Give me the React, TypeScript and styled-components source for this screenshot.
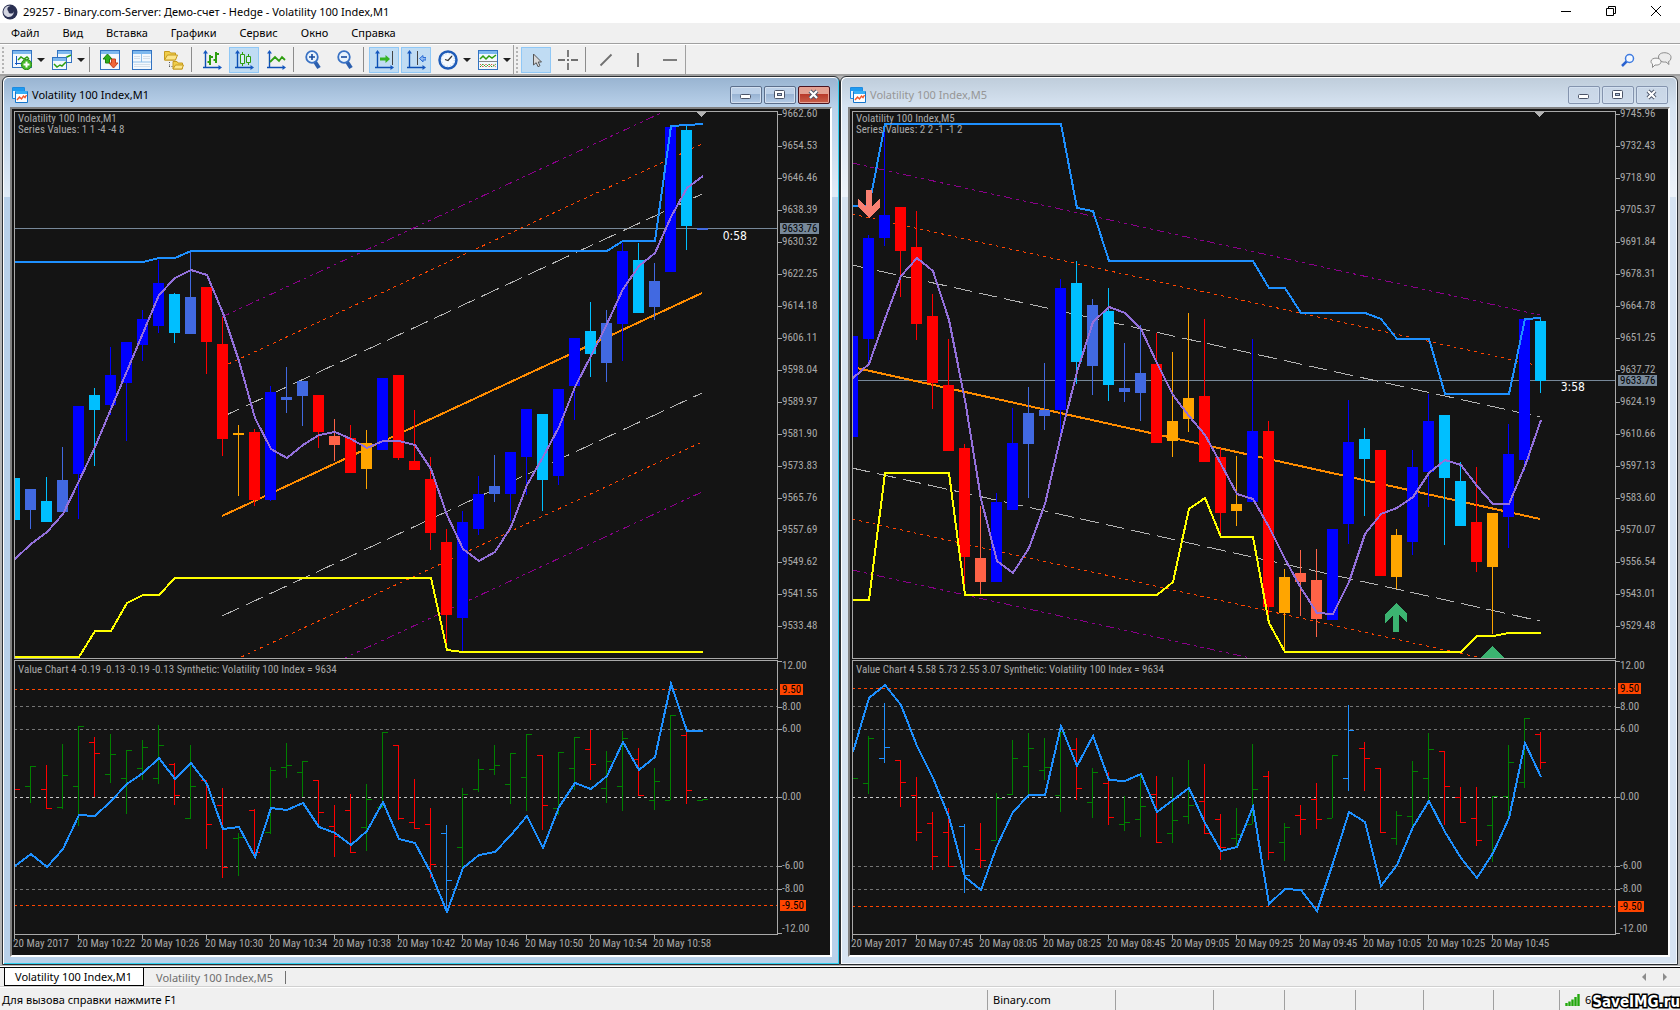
import React from 'react';
import styled, { createGlobalStyle } from 'styled-components';

/* ------------------------------------------------------------------ data */

type Tone = 'B' | 'C' | 'R' | 'r' | 'O' | 'T';
const TONES: Record<Tone, string> = {
  B: '#0000ff',
  C: '#00bfff',
  R: '#4169e1',
  r: '#ff0000',
  O: '#ffa500',
  T: '#ff6347',
};
/* tone, body top, body bottom, wick top, wick bottom */
type Candle = [Tone, number, number, number, number];
/* colour, high, low, open, close */
type Bar = ['g' | 'r' | 'b', number, number, number, number];
type Point = [number, number];

interface ChannelLine {
  kind: 'outer' | 'middle' | 'inner' | 'base';
  from: Point;
  to: Point;
}

interface Chart {
  title: string;
  series: string;
  active: boolean;
  prices: string[];
  lineY: number;
  timer: string;
  timerY: number;
  candles: Candle[];
  upper: Point[];
  lower: Point[];
  average: number[];
  channel: ChannelLine[];
  valueText: string;
  bars: Bar[];
  valueLine: number[];
  high: number;
  low: number;
  times: string[];
  signals: boolean;
}

const m1: Chart = {
  title: 'Volatility 100 Index,M1',
  series: 'Series Values: 1 1 -4 -4 8',
  active: true,
  prices: ['9662.60', '9654.53', '9646.46', '9638.39', '9630.32', '9622.25', '9614.18', '9606.11', '9598.04', '9589.97', '9581.90', '9573.83', '9565.76', '9557.69', '9549.62', '9541.55', '9533.48'],
  lineY: 228,
  timer: '0:58',
  timerY: 229,
  candles: [
    ['C', 478, 520, 478, 520], ['R', 489, 510, 489, 529], ['C', 501, 522, 477, 522], ['R', 480, 512, 447, 512],
    ['B', 406, 474, 406, 519], ['C', 395, 410, 388, 466], ['B', 375, 405, 347, 415], ['B', 342, 383, 342, 441],
    ['B', 319, 345, 310, 361], ['B', 283, 326, 260, 333], ['C', 294, 333, 293, 343], ['R', 297, 334, 252, 334],
    ['r', 287, 342, 287, 374], ['r', 344, 439, 317, 456], ['O', 433, 435, 425, 496], ['r', 432, 500, 429, 506],
    ['B', 392, 500, 386, 501], ['R', 397, 400, 367, 413], ['R', 381, 396, 381, 426], ['r', 395, 432, 395, 448],
    ['T', 436, 445, 419, 461], ['r', 438, 473, 425, 473], ['O', 443, 469, 430, 489], ['B', 378, 450, 378, 450],
    ['r', 375, 458, 375, 460], ['r', 461, 470, 410, 470], ['r', 479, 533, 457, 550], ['r', 542, 615, 529, 649],
    ['B', 522, 618, 511, 651], ['B', 494, 529, 476, 535], ['R', 486, 494, 455, 502], ['B', 452, 494, 452, 521],
    ['B', 409, 457, 409, 495], ['C', 414, 480, 414, 511], ['B', 389, 476, 389, 485], ['B', 338, 386, 338, 420],
    ['C', 331, 354, 302, 377], ['R', 323, 363, 310, 382], ['B', 251, 324, 243, 361], ['C', 260, 313, 243, 313],
    ['R', 281, 307, 263, 320], ['B', 127, 272, 127, 272], ['C', 130, 226, 125, 250], ['R', 228, 230, 228, 230],
  ],
  upper: [[0, 262], [8, 262], [9, 258], [10, 258], [11, 251], [37, 251], [38, 241], [40, 241], [41, 126], [42, 125], [43, 124]],
  lower: [[0, 657], [4, 657], [5, 631], [6, 631], [7, 603], [8, 595], [9, 595], [10, 578], [26, 578], [27, 650], [28, 652], [43, 652]],
  average: [559, 544, 532, 514, 481, 447, 409, 371, 333, 295, 278, 270, 275, 313, 361, 418, 449, 458, 445, 435, 432, 439, 448, 441, 441, 445, 469, 515, 549, 561, 552, 527, 485, 457, 427, 387, 356, 324, 289, 266, 253, 217, 188, 176],
  channel: [
    { kind: 'outer', from: [13, 317], to: [43, 94] },
    { kind: 'middle', from: [13, 367], to: [43, 144] },
    { kind: 'inner', from: [13, 417], to: [43, 194] },
    { kind: 'base', from: [13, 516], to: [43, 293] },
    { kind: 'inner', from: [13, 616], to: [43, 393] },
    { kind: 'middle', from: [13, 666], to: [43, 442] },
    { kind: 'outer', from: [13, 715], to: [43, 492] },
  ],
  valueText: 'Value Chart 4 -0.19 -0.13 -0.19 -0.13 Synthetic: Volatility 100 Index = 9634',
  bars: [
    ['r', 789, 790, 789, 789], ['g', 766, 803, 786, 766], ['r', 765, 808, 789, 808], ['g', 744, 809, 807, 775],
    ['g', 726, 826, 786, 726], ['r', 737, 797, 742, 753], ['g', 734, 783, 774, 754], ['g', 750, 814, 778, 750],
    ['g', 740, 780, 768, 747], ['g', 725, 784, 778, 745], ['r', 763, 805, 764, 795], ['g', 745, 819, 818, 786],
    ['r', 780, 849, 780, 824], ['r', 788, 878, 805, 867], ['g', 833, 876, 838, 837], ['r', 809, 855, 810, 852],
    ['g', 767, 834, 832, 770], ['g', 743, 778, 767, 765], ['g', 761, 797, 772, 761], ['r', 780, 827, 780, 812],
    ['r', 805, 857, 826, 836], ['r', 794, 852, 810, 852], ['g', 784, 851, 827, 799], ['g', 732, 808, 807, 732],
    ['r', 745, 820, 745, 818], ['r', 779, 828, 822, 828], ['r', 808, 878, 824, 864], ['b', 825, 908, 833, 880],
    ['g', 788, 868, 847, 794], ['g', 759, 792, 789, 769], ['g', 745, 775, 769, 765], ['g', 753, 804, 784, 753],
    ['g', 734, 811, 777, 734], ['r', 755, 830, 755, 805], ['g', 752, 815, 808, 752], ['g', 737, 790, 768, 737],
    ['r', 730, 780, 749, 764], ['g', 751, 803, 788, 761], ['g', 731, 811, 786, 738], ['r', 748, 795, 759, 795],
    ['g', 768, 810, 800, 781], ['g', 715, 800, 800, 715], ['r', 732, 804, 735, 790], ['g', 799, 801, 800, 799],
  ],
  valueLine: [866, 854, 867, 849, 815, 816, 801, 784, 773, 758, 779, 763, 784, 829, 827, 857, 808, 810, 803, 827, 833, 845, 831, 802, 839, 843, 873, 912, 868, 855, 852, 835, 816, 848, 807, 783, 789, 776, 742, 770, 757, 684, 731, 731],
  high: 689,
  low: 905,
  times: ['20 May 2017', '20 May 10:22', '20 May 10:26', '20 May 10:30', '20 May 10:34', '20 May 10:38', '20 May 10:42', '20 May 10:46', '20 May 10:50', '20 May 10:54', '20 May 10:58'],
  signals: false,
};

const m5: Chart = {
  title: 'Volatility 100 Index,M5',
  series: 'Series Values: 2 2 -1 -1 2',
  active: false,
  prices: ['9745.96', '9732.43', '9718.90', '9705.37', '9691.84', '9678.31', '9664.78', '9651.25', '9637.72', '9624.19', '9610.66', '9597.13', '9583.60', '9570.07', '9556.54', '9543.01', '9529.48'],
  lineY: 380,
  timer: '3:58',
  timerY: 380,
  candles: [
    ['B', 336, 437, 336, 437], ['B', 238, 339, 235, 363], ['B', 215, 238, 127, 246], ['r', 207, 251, 207, 297],
    ['r', 247, 324, 211, 340], ['r', 316, 383, 294, 409], ['r', 385, 451, 339, 451], ['r', 448, 557, 444, 594],
    ['T', 558, 582, 506, 594], ['B', 502, 582, 493, 582], ['B', 443, 510, 408, 510], ['R', 413, 444, 387, 498],
    ['R', 410, 416, 363, 430], ['B', 288, 410, 279, 441], ['C', 283, 362, 261, 384], ['R', 305, 366, 299, 395],
    ['C', 311, 385, 288, 401], ['R', 388, 392, 343, 402], ['R', 373, 393, 325, 421], ['r', 364, 443, 333, 443],
    ['O', 421, 441, 352, 457], ['O', 398, 419, 313, 432], ['r', 396, 462, 319, 462], ['r', 457, 513, 448, 536],
    ['O', 504, 511, 456, 526], ['B', 431, 502, 339, 502], ['r', 431, 607, 421, 617], ['O', 577, 613, 569, 651],
    ['T', 573, 582, 550, 616], ['T', 580, 619, 549, 637], ['B', 529, 620, 529, 620], ['B', 442, 524, 400, 544],
    ['C', 439, 459, 428, 516], ['r', 450, 576, 450, 576], ['O', 535, 577, 529, 589], ['B', 467, 542, 450, 555],
    ['B', 421, 472, 394, 507], ['C', 415, 478, 415, 545], ['C', 481, 526, 462, 526], ['r', 522, 562, 467, 572],
    ['O', 513, 567, 513, 634], ['B', 454, 517, 424, 548], ['B', 319, 460, 319, 471], ['C', 321, 381, 319, 393],
  ],
  upper: [[0, 206], [1, 206], [2, 124], [13, 124], [14, 208], [15, 211], [16, 261], [25, 261], [26, 288], [27, 288], [28, 313], [32, 313], [33, 319], [34, 339], [36, 339], [37, 394], [41, 394], [42, 319], [43, 318]],
  lower: [[0, 600], [1, 600], [2, 473], [6, 473], [7, 595], [19, 595], [20, 582], [21, 509], [22, 498], [23, 537], [25, 537], [26, 623], [27, 652], [38, 652], [39, 636], [40, 636], [41, 633], [43, 633]],
  average: [378, 364, 319, 276, 258, 271, 320, 400, 499, 561, 573, 548, 504, 435, 372, 322, 307, 313, 329, 363, 395, 416, 435, 464, 494, 499, 527, 559, 588, 613, 614, 582, 534, 514, 508, 497, 473, 460, 465, 486, 504, 504, 466, 420],
  channel: [
    { kind: 'outer', from: [0, 163], to: [43, 315] },
    { kind: 'middle', from: [0, 214], to: [43, 366] },
    { kind: 'inner', from: [0, 265], to: [43, 417] },
    { kind: 'base', from: [0, 367], to: [43, 519] },
    { kind: 'inner', from: [0, 468], to: [43, 621] },
    { kind: 'middle', from: [0, 519], to: [43, 671] },
    { kind: 'outer', from: [0, 570], to: [43, 722] },
  ],
  valueText: 'Value Chart 4 5.58 5.73 2.55 3.07 Synthetic: Volatility 100 Index = 9634',
  bars: [
    ['g', 777, 779, 778, 778], ['g', 736, 794, 783, 738], ['b', 703, 763, 758, 747], ['r', 760, 807, 760, 782],
    ['r', 777, 841, 795, 832], ['r', 812, 870, 823, 856], ['r', 808, 866, 832, 866], ['b', 824, 893, 826, 875],
    ['r', 823, 868, 849, 860], ['g', 793, 840, 840, 798], ['g', 740, 795, 794, 758], ['g', 733, 797, 766, 748],
    ['g', 738, 780, 770, 767], ['g', 728, 812, 795, 732], ['r', 738, 800, 749, 788], ['g', 768, 818, 802, 772],
    ['r', 772, 825, 783, 817], ['g', 796, 831, 824, 822], ['g', 774, 837, 819, 806], ['r', 776, 842, 794, 842],
    ['g', 777, 843, 833, 820], ['g', 760, 824, 816, 805], ['r', 764, 834, 801, 833], ['r', 814, 860, 819, 847],
    ['g', 808, 847, 838, 834], ['g', 744, 824, 824, 789], ['r', 771, 860, 776, 852], ['g', 823, 861, 842, 827],
    ['r', 805, 835, 815, 819], ['r', 783, 829, 799, 819], ['g', 755, 818, 818, 755], ['b', 705, 791, 778, 730],
    ['r', 742, 791, 748, 758], ['r', 768, 832, 768, 832], ['g', 811, 845, 838, 815], ['g', 761, 827, 816, 771],
    ['g', 733, 800, 778, 749], ['r', 751, 825, 751, 786], ['r', 787, 822, 797, 822], ['r', 787, 846, 818, 840],
    ['g', 796, 862, 825, 796], ['g', 745, 818, 796, 762], ['g', 718, 788, 782, 718], ['r', 732, 769, 734, 762],
  ],
  valueLine: [752, 698, 685, 705, 746, 778, 817, 877, 890, 846, 812, 795, 795, 726, 766, 736, 780, 781, 774, 812, 800, 788, 823, 851, 847, 807, 904, 889, 890, 911, 863, 812, 822, 886, 865, 827, 801, 832, 858, 878, 853, 818, 743, 777],
  high: 688,
  low: 906,
  times: ['20 May 2017', '20 May 07:45', '20 May 08:05', '20 May 08:25', '20 May 08:45', '20 May 09:05', '20 May 09:25', '20 May 09:45', '20 May 10:05', '20 May 10:25', '20 May 10:45'],
  signals: true,
};

/* ---------------------------------------------------------------- styles */

const UI_FONT = '"Noto Sans", "Open Sans", sans-serif';
const CHART_FONT = '"Roboto Condensed", Roboto, sans-serif';
const GREY = '#a9a9a9';
const CHART_BG = '#141414';

const GlobalStyle = createGlobalStyle`
  * { box-sizing: border-box; }
  body { margin: 0; background: #f0f0f0; }
  button, a { font: inherit; color: inherit; text-decoration: none; }
  button { padding: 0; margin: 0; border: 0; background: none; }
`;

const Terminal = styled.div`
  display: flex;
  flex-direction: column;
  height: 100vh;
  overflow: hidden;
  background: #f0f0f0;
  color: #000;
  font: 11px/16px ${UI_FONT};
`;

const TitleBar = styled.header`
  display: flex;
  align-items: center;
  flex: none;
  height: 23px;
  padding: 0 2px;
  background: #fff;
`;

const AppTitle = styled.h1`
  flex: 1;
  margin: 0 0 0 5px;
  font: inherit;
  white-space: nowrap;
`;

const CaptionButton = styled.button`
  display: grid;
  place-items: center;
  width: 45px;
  height: 22px;
`;

const Menu = styled.nav`
  display: flex;
  align-items: center;
  flex: none;
  gap: 23px;
  height: 21px;
  padding-left: 11px;
  border-bottom: 1px solid #a0a0a0;
`;

const Toolbar = styled.div`
  display: flex;
  flex: none;
  align-items: center;
  height: 30px;
  border-top: 1px solid #fff;
`;

const ToolGroup = styled.div`
  display: flex;
  align-items: center;
  align-self: stretch;
  border-right: 1px solid #a0a0a0;
`;

const Grip = styled.span`
  width: 2px;
  height: 26px;
  margin: 0 3px 0 2px;
  background: repeating-linear-gradient(#b4b4b4 0 2px, transparent 2px 4px);
`;

const ToolButton = styled.button<{ $on?: boolean; $spaced?: boolean }>`
  display: grid;
  place-items: center;
  width: 30px;
  height: 26px;
  margin-right: ${(p) => (p.$spaced ? 2 : 0)}px;
  border: 1px solid ${(p) => (p.$on ? '#90c8f6' : 'transparent')};
  background: ${(p) => (p.$on ? '#c0dcf3' : 'transparent')};
`;

const DropArrow = styled.button`
  display: flex;
  align-items: center;
  width: 10px;
  height: 26px;
  &::after {
    content: '';
    border: 4px solid transparent;
    border-top-color: #202020;
    border-bottom: 0;
  }
`;

const Divider = styled.span`
  width: 1px;
  height: 25px;
  margin: 0 5px 0 2px;
  background: #8c8c8c;
`;

const ToolEnd = styled.div`
  display: flex;
  gap: 3px;
  margin-left: auto;
  padding-right: 4px;
`;

const Workspace = styled.main`
  display: flex;
  flex: 1;
  min-height: 0;
  padding: 0 2px 1px;
  border-top: 2px solid #a0a0a0;
  border-bottom: 1px solid #fff;
  background: #b4b4b4;
`;

const WindowFrame = styled.section<{ $active: boolean }>`
  display: flex;
  flex-direction: column;
  flex: 1;
  min-width: 0;
  border: 1px solid #2b2f33;
  border-radius: 6px 6px 0 0;
  background: ${(p) => (p.$active ? '#b9d1ea' : '#d7e4f2')};
  box-shadow: inset 1px 1px #fff, inset -1px -1px ${(p) => (p.$active ? '#2fd0f0' : '#f4f8fc')};
  padding: 1px;
`;

const WindowTitle = styled.div<{ $active: boolean }>`
  display: flex;
  align-items: center;
  flex: none;
  height: 29px;
  gap: 4px;
  padding: 8px 8px 3px;
  border-radius: 5px 5px 0 0;
  color: ${(p) => (p.$active ? '#000' : '#969696')};
  background: linear-gradient(${(p) => (p.$active ? '#99b4d1, #b9d1ea' : '#bfcddb, #d7e4f2')});
`;

const WindowName = styled.h2`
  flex: 1;
  margin: 0;
  font: inherit;
  white-space: nowrap;
`;

const WindowButtons = styled.div`
  display: flex;
  gap: 2px;
`;

const WindowButton = styled.button<{ $active: boolean; $danger?: boolean }>`
  display: grid;
  place-items: center;
  width: 32px;
  height: 18px;
  border: 1px solid ${(p) => (p.$danger ? '#4a1420' : p.$active ? '#5c6f8c' : '#8494ae')};
  border-radius: 2px;
  box-shadow: inset 0 0 0 1px ${(p) => (p.$danger ? '#e8a294' : '#d3e0f0')};
  background: ${(p) =>
    p.$danger
      ? 'linear-gradient(#e3a193 0 45%, #b8392a 45%, #c8604a)'
      : p.$active
        ? 'linear-gradient(#bcd0e8 0 45%, #98b3d3 45%, #b4cbe6)'
        : 'linear-gradient(#c8d6e6, #cddaea)'};
`;

const WindowClient = styled.div`
  display: flex;
  flex: 1;
  min-height: 0;
  padding: 0 6px 6px;
  background:
    linear-gradient(transparent, #ffffff90) 0 0 / 6px 90px no-repeat,
    linear-gradient(transparent, #ffffff90) 100% 0 / 6px 90px no-repeat;
`;

const ChartBody = styled.div`
  display: flex;
  flex-direction: column;
  flex: 1;
  min-width: 0;
  padding-left: 2px;
  border: 2px solid;
  border-color: #808080 #fff #fff #808080;
  background: ${CHART_BG};
  color: ${GREY};
  font: 11px/10px ${CHART_FONT};
`;

const Pane = styled.div<{ $grow: number }>`
  display: flex;
  flex: ${(p) => p.$grow} 1 0;
  min-height: 0;
  & + & { margin-top: 1px; }
`;

const Plot = styled.div<{ $inset?: boolean }>`
  position: relative;
  flex: 1;
  min-width: 0;
  margin-top: ${(p) => (p.$inset ? 2 : 0)}px;
  border: 1px solid ${GREY};
  overflow: hidden;
  svg { display: block; width: 100%; height: 100%; }
`;

const PlotCaption = styled.p<{ $sub?: boolean }>`
  position: absolute;
  top: ${(p) => (p.$sub ? 3 : 1)}px;
  left: 3px;
  margin: 0;
  line-height: 11px;
  white-space: nowrap;
`;

const Countdown = styled.span<{ $y: number }>`
  position: absolute;
  top: calc(100% * ${(p) => p.$y - 112} / 546);
  right: 30px;
  color: #fff;
  font: 12px/14px "DejaVu Sans Condensed", "DejaVu Sans", sans-serif;
`;

const Scale = styled.div<{ $even?: boolean }>`
  position: relative;
  display: flex;
  flex-direction: column;
  flex: none;
  width: 52px;
  justify-content: ${(p) => (p.$even ? 'space-between' : 'flex-start')};
  padding-bottom: ${(p) => (p.$even ? 28 : 0)}px;
`;

const ScaleLabel = styled.span<{ $tick?: 'top' | 'bottom' }>`
  display: flex;
  align-items: ${(p) => (p.$tick === 'top' ? 'flex-start' : p.$tick === 'bottom' ? 'flex-end' : 'center')};
  height: 10px;
  &::before {
    content: '';
    width: 4px;
    height: 1px;
    background: ${GREY};
  }
`;

const Spring = styled.i<{ $grow: number }>`
  flex: ${(p) => p.$grow} 1 0;
`;

const Marker = styled.span<{ $top: number; $of: number; $hot?: boolean }>`
  position: absolute;
  left: 2px;
  top: calc(100% * ${(p) => p.$top} / ${(p) => p.$of});
  padding: 0 2px;
  color: #000;
  line-height: 11px;
  background: ${(p) => (p.$hot ? '#ff4500' : '#778899')};
`;

const TimeScale = styled.div`
  display: flex;
  flex: none;
  height: 20px;
  margin-left: -1px;
  overflow: hidden;
`;

const TimeLabel = styled.span`
  flex: none;
  width: 64px;
  white-space: nowrap;
  &::before {
    content: '';
    display: block;
    width: 1px;
    height: 4px;
    margin-left: 1px;
    background: ${GREY};
  }
`;

const TabStrip = styled.nav`
  display: flex;
  flex: none;
  height: 19px;
  padding-left: 4px;
  border-top: 1px solid #000;
`;

const Tab = styled.a<{ $on?: boolean }>`
  padding: 0 ${(p) => (p.$on ? 11 : 12)}px 0 ${(p) => (p.$on ? 10 : 12)}px;
  margin: ${(p) => (p.$on ? '0' : '3px 0 2px')};
  line-height: ${(p) => (p.$on ? 17 : 13)}px;
  white-space: nowrap;
  border: ${(p) => (p.$on ? '1px solid #000' : '0 solid #707070')};
  border-top: 0;
  border-right-width: 1px;
  color: ${(p) => (p.$on ? '#000' : '#6d6d6d')};
  background: ${(p) => (p.$on ? '#fff' : 'transparent')};
`;

const TabScroll = styled.div`
  display: flex;
  align-items: center;
  gap: 17px;
  margin-left: auto;
  padding-right: 13px;
`;

const Nudge = styled.button<{ $back?: boolean }>`
  border: 4px solid transparent;
  border-left-color: ${(p) => (p.$back ? 'transparent' : '#8c8c8c')};
  border-right-color: ${(p) => (p.$back ? '#8c8c8c' : 'transparent')};
  border-left-width: ${(p) => (p.$back ? 0 : 4)}px;
  border-right-width: ${(p) => (p.$back ? 4 : 0)}px;
`;

const StatusBar = styled.footer`
  position: relative;
  display: flex;
  flex: none;
  height: 24px;
  padding-top: 3px;
  border-top: 1px solid #d0d0d0;
  box-shadow: inset 0 1px #fff;
`;

const StatusHint = styled.span`
  flex: 1;
  padding-left: 2px;
  line-height: 20px;
`;

const StatusCell = styled.span<{ $w: number }>`
  display: flex;
  flex: none;
  align-items: center;
  gap: 4px;
  width: ${(p) => p.$w}px;
  padding-left: 5px;
  line-height: 20px;
  border-left: 1px solid #a0a0a0;
`;

const Watermark = styled.span`
  position: absolute;
  right: 0;
  bottom: 0;
  color: #fff;
  font: bold 15px/16px "DejaVu Sans Condensed", "DejaVu Sans", sans-serif;
  -webkit-text-stroke: 3px #000;
  paint-order: stroke fill;
`;

/* ----------------------------------------------------------------- icons */

const Svg = ({ w = 20, h = 20, children }: { w?: number; h?: number; children: React.ReactNode }) => (
  <svg width={w} height={h} viewBox={`0 0 ${w} ${h}`} fill="none" aria-hidden="true">
    {children}
  </svg>
);

const Frame = ({ x = 0, y = 0, w = 20, h = 20 }: { x?: number; y?: number; w?: number; h?: number }) => (
  <>
    <rect x={x + 0.5} y={y + 0.5} width={w - 1} height={h - 1} fill="#f3f8fd" stroke="#3273c2" />
    <rect x={x + 1} y={y + 1} width={w - 2} height={3} fill="#7db8ee" />
  </>
);

const Axes = () => (
  <>
    <path d="M3.5 2v16M1 17.5h17" stroke="#0d4fb4" strokeWidth="1.4" />
    <path d="M3.5 0l2.5 3.5h-5zM20 17.5l-3.5-2.5v5z" fill="#1658c0" />
  </>
);

const AppIcon = () => (
  <Svg w={16} h={16}>
    <circle cx="8" cy="8" r="7.500" fill="#2a3052" />
    <path d="M1.500 7c.8-3.800 4.200-5.700 7-5 -2.600.6-3.600 2.200-3 4 .6 1.700 3.400 1.600 5.600 1.200 1.300 1.400.2 4-2 5.300-3.800 1.700-8-1.200-7.600-5.500z" fill="#d4d6e2" />
    <circle cx="9" cy="7" r="2.600" fill="#2a3052" />
  </Svg>
);

const NewChartIcon = () => (
  <Svg>
    <Frame h={18} />
    <path d="M4.500 6v9M3 13.500h10" stroke="#1658c0" />
    <path d="M6 10l3-3 3 2 3-2 2 2" stroke="#2e9e10" strokeWidth="1.500" />
    <circle cx="14.500" cy="14.500" r="5.200" fill="#45b82a" stroke="#2b8a17" />
    <path d="M11.500 14.500h6M14.500 11.500v6" stroke="#fff" strokeWidth="2" />
  </Svg>
);

const WindowsIcon = () => (
  <Svg>
    <Frame x={5} w={15} h={13} />
    <path d="M12 9l3-2 4-2" stroke="#2e9e10" strokeWidth="1.500" />
    <Frame y={7} w={15} h={13} />
    <path d="M2 14l3 3 3-2 2 1 4-4" stroke="#2e9e10" strokeWidth="1.500" />
  </Svg>
);

const TradeIcon = () => (
  <Svg>
    <Frame />
    <path d="M7.500 4l4.500 5H9.500v4h-4V9H3z" fill="#2fae1c" stroke="#1b7f10" />
    <path d="M13.500 18l4.500-5h-2.500V9h-4v4H9z" fill="#f0673a" stroke="#c4401c" />
  </Svg>
);

const PanelIcon = () => (
  <Svg>
    <Frame />
    <path d="M1 12h18M9.500 4v8" stroke="#8fc0ea" />
    <path d="M2 6.500h6M2 8.500h6M11 6.500h7M11 8.500h7M2 14.500h16M2 16.500h16" stroke="#d4dfe9" />
  </Svg>
);

const FoldersIcon = () => (
  <Svg>
    <path d="M.5 1.500h5l1 1.500h5v7H.5z" fill="#f0cd4a" stroke="#c59a1e" />
    <path d="M.5 10l3-5h10l-2 5z" fill="#fbe58a" stroke="#c59a1e" />
    <path d="M5.500 12v5M5 16.500h4" stroke="#555" strokeDasharray="1 1.500" />
    <path d="M9 11.500h4l1 1.500h4.500v6H9z" fill="#f0cd4a" stroke="#c59a1e" />
    <path d="M9 19l2.500-4h8L18 19z" fill="#fbe58a" stroke="#c59a1e" />
  </Svg>
);

const BarsIcon = () => (
  <Svg>
    <Axes />
    <path d="M8 5v10M5.500 12H8M8 7h3M14 2v11M11.500 10H14M14 4h3" stroke="#2e9e10" strokeWidth="2" />
  </Svg>
);

const CandlesIcon = () => (
  <Svg>
    <Axes />
    <path d="M8.500 2v14M14.500 4v11" stroke="#2e9e10" />
    <path d="M6.500 4.500h4v9h-4zM12.500 6.500h4v6h-4z" fill="#d8ecf8" stroke="#2e9e10" />
  </Svg>
);

const LineIcon = () => (
  <Svg>
    <Axes />
    <path d="M4 12l5-5 4 4 3-4 3 3" stroke="#2e9e10" strokeWidth="1.800" />
  </Svg>
);

const ZoomIcon = ({ plus }: { plus?: boolean }) => (
  <Svg>
    <path d="M10.500 11l4.500 7" stroke="#2c5fae" strokeWidth="4" />
    <circle cx="8" cy="7" r="5.800" fill="#eaf4fd" stroke="#3a72c4" strokeWidth="1.800" />
    <path d={plus ? 'M5 7h6M8 4v6' : 'M5 7h6'} stroke="#174a9c" strokeWidth="1.600" />
  </Svg>
);

const ScrollIcon = () => (
  <Svg>
    <Axes />
    <path d="M18.500 1v14" stroke="#444" />
    <path d="M6 7.500h5.500V5l4.500 4-4.500 4v-2.500H6z" fill="#35b324" />
  </Svg>
);

const ShiftIcon = () => (
  <Svg>
    <Axes />
    <path d="M11.500 1v14" stroke="#444" />
    <path d="M13.500 8.500l3.500-3v2h3v2.500h-3v2z" fill="#8db8f0" stroke="#2c6fd6" />
  </Svg>
);

const ClockIcon = () => (
  <Svg>
    <circle cx="10" cy="10" r="8.500" fill="#f6fafe" stroke="#1f5cb8" strokeWidth="2.500" />
    <circle cx="10" cy="10" r="6.300" stroke="#9cc3ec" strokeDasharray="1 2.300" />
    <path d="M14 6l-4 4.500-3-1" stroke="#333" strokeWidth="1.200" />
  </Svg>
);

const IndicatorsIcon = () => (
  <Svg>
    <Frame />
    <path d="M2 9l3-3 3 3 3-3 3 2 4-3" stroke="#2e9e10" strokeWidth="1.500" />
    <path d="M1 11.500h18" stroke="#888" />
    <path d="M2 14l3 3 3-3 3 3 3-3 4 3" stroke="#e2543a" strokeDasharray="2 1" />
    <path d="M2 17l3-3 3 3 3-3 3 3 4-3" stroke="#2e9e10" strokeDasharray="2 1" />
  </Svg>
);

const PointerIcon = () => (
  <Svg>
    <path d="M7.500 4v11l2.700-2.300 1.800 4 2-1-1.800-3.700h3.300z" fill="#d8d8d8" stroke="#555" />
  </Svg>
);

const CrosshairIcon = () => (
  <Svg>
    <path d="M0 10h7M13 10h7M10 0v7M10 13v7M9 10h2" stroke="#707070" strokeWidth="1.800" />
  </Svg>
);

const StrokeIcon = ({ d }: { d: string }) => (
  <Svg>
    <path d={d} stroke="#707070" strokeWidth="1.800" />
  </Svg>
);

const FindIcon = () => (
  <Svg w={14} h={14}>
    <path d="M1 13l5-5" stroke="#2a62d0" strokeWidth="2.500" />
    <circle cx="8.500" cy="5.500" r="4" fill="#f4f9ff" stroke="#3f7be0" strokeWidth="1.500" />
  </Svg>
);

const ChatIcon = () => (
  <Svg w={22} h={16}>
    <path d="M8.500 5c0-6 12.500-5.500 12.500.2 0 3-1.500 4-2.500 4.300l.5 3-3-2.500c-4 .5-7.500-1-7.500-5z" fill="#ececec" stroke="#8c8c8c" />
    <path d="M1 9.500c0-4.500 10-4.500 10 0 0 3-3 3.800-6 3.500l-2.500 2.500V12C1.500 11.500 1 10.500 1 9.500z" fill="#f6f6f6" stroke="#8c8c8c" />
  </Svg>
);

const ChartWindowIcon = () => (
  <Svg w={16} h={16}>
    <path d="M.5.5h12v11H.5z" fill="#e6f2fc" stroke="#1f8be0" />
    <path d="M1 1h11v3H1z" fill="#1f9bf0" />
    <path d="M3.500 4.500h12v11h-12z" fill="#fff" stroke="#1576cc" />
    <path d="M4 4h11v3H4z" fill="#35aef5" />
    <path d="M5 13l2.500-3 2 2 2-3 1.500 1.500L14.500 8" stroke="#f0582a" strokeWidth="1.400" />
  </Svg>
);

const MinimizeGlyph = () => (
  <Svg w={14} h={12}>
    <rect x="1.500" y="5.500" width="10" height="4" rx="1" fill="#fff" stroke="#4b5468" />
  </Svg>
);

const RestoreGlyph = () => (
  <Svg w={14} h={12}>
    <rect x="1.500" y="1.500" width="10" height="8" rx="1" fill="#fff" stroke="#4b5468" />
    <rect x="4.500" y="4.500" width="4" height="2" fill="#b0c4de" stroke="#4b5468" />
  </Svg>
);

const CloseGlyph = () => (
  <Svg w={14} h={12}>
    <path d="M3 2l7 7M10 2L3 9" stroke="#4b5468" strokeWidth="4" />
    <path d="M3 2l7 7M10 2L3 9" stroke="#fff" strokeWidth="2.200" />
  </Svg>
);

const SignalIcon = () => (
  <Svg w={16} h={12}>
    <path d="M1.500 12V9M4.500 12V7.500M7.500 12V5.500M10.500 12V3M13.500 12V0" stroke="#22a80c" strokeWidth="2.400" />
  </Svg>
);

/* ---------------------------------------------------------------- charts */

const STEP = 16;
const CHANNEL_STYLE = {
  outer: { stroke: '#8b008b', strokeWidth: 1, strokeDasharray: '8 4 3 4 3 4' },
  middle: { stroke: '#ff4500', strokeWidth: 1, strokeDasharray: '3 4' },
  inner: { stroke: '#b4b4b4', strokeWidth: 1, strokeDasharray: '19 7' },
  base: { stroke: '#ff8c00', strokeWidth: 2 },
};
const BAR_TONES = { g: '#008000', r: '#ff0000', b: '#1e90ff' };

const path = (points: Point[]) => points.map(([k, y]) => `${k * STEP + 1},${y}`).join(' ');

const PricePlot = ({ chart }: { chart: Chart }) => (
  <svg viewBox="1 112 762 546" preserveAspectRatio="none" shapeRendering="crispEdges" fill="none" role="img" aria-label={chart.title}>
    <rect x="0" y={chart.lineY} width="764" height="1" fill="#778899" />
    {chart.channel.map((line, i) => (
      <line key={i} x1={line.from[0] * STEP} y1={line.from[1]} x2={line.to[0] * STEP} y2={line.to[1]} {...CHANNEL_STYLE[line.kind]} />
    ))}
    {chart.candles.map(([tone, top, bottom, high, low], k) => (
      <g key={k} fill={TONES[tone]}>
        <rect x={k * STEP} y={high} width="1" height={low - high} />
        <rect x={k * STEP - 5} y={top} width="11" height={bottom - top} />
      </g>
    ))}
    <polyline points={path(chart.upper)} stroke="#1e90ff" strokeWidth="2" />
    <polyline points={path(chart.lower)} stroke="#ffff00" strokeWidth="2" />
    <polyline points={path(chart.average.map((y, k) => [k, y]))} stroke="#9370db" strokeWidth="2" />
    <path d="M682 112h10l-5 5z" fill="#b4b4b4" />
    {chart.signals && (
      <>
        <path d="M14 190h6v16l8-7v8l-11 11-11-11v-8l8 7z" fill="#fa8072" />
        <path d="M541 632h6v-17l8 8v-9l-11-11-11 11v9l8-8z" fill="#3cb371" />
        <path d="M640 646l12 12h-24z" fill="#3cb371" />
      </>
    )}
  </svg>
);

const ValuePlot = ({ chart }: { chart: Chart }) => (
  <svg viewBox="1 661 762 273" preserveAspectRatio="none" shapeRendering="crispEdges" fill="none" role="img" aria-label="Value Chart">
    {[706, 729, 866, 889].map((y) => (
      <path key={y} d={`M0 ${y}.5h764`} stroke="#757575" strokeDasharray="3 3" />
    ))}
    <path d="M0 797.5h764" stroke="#c8c8c8" strokeDasharray="3 3" />
    {[chart.high, chart.low].map((y) => (
      <path key={y} d={`M0 ${y}.5h764`} stroke="#ff4500" strokeDasharray="3 3" />
    ))}
    {chart.bars.map(([tone, high, low, open, close], k) => (
      <g key={k} fill={BAR_TONES[tone]}>
        <rect x={k * STEP} y={high} width="1" height={low - high} />
        <rect x={k * STEP - 5} y={open} width="5" height="1" />
        <rect x={k * STEP} y={close} width="6" height="1" />
      </g>
    ))}
    <polyline points={path(chart.valueLine.map((y, k) => [k, y]))} stroke="#1e90ff" strokeWidth="2" />
  </svg>
);

const ChartWindow = ({ chart }: { chart: Chart }) => (
  <WindowFrame $active={chart.active}>
    <WindowTitle $active={chart.active}>
      <ChartWindowIcon />
      <WindowName>{chart.title}</WindowName>
      <WindowButtons>
        <WindowButton $active={chart.active} aria-label="Свернуть"><MinimizeGlyph /></WindowButton>
        <WindowButton $active={chart.active} aria-label="Развернуть"><RestoreGlyph /></WindowButton>
        <WindowButton $active={chart.active} $danger={chart.active} aria-label="Закрыть"><CloseGlyph /></WindowButton>
      </WindowButtons>
    </WindowTitle>
    <WindowClient>
      <ChartBody>
        <Pane $grow={550}>
          <Plot $inset>
            <PricePlot chart={chart} />
            <PlotCaption>
              {chart.title}
              <br />
              {chart.series}
            </PlotCaption>
            <Countdown $y={chart.timerY}>{chart.timer}</Countdown>
          </Plot>
          <Scale $even>
            {chart.prices.map((price) => (
              <ScaleLabel key={price}>{price}</ScaleLabel>
            ))}
            <Marker $top={chart.lineY - 114} $of={550}>9633.76</Marker>
          </Scale>
        </Pane>
        <Pane $grow={275}>
          <Plot>
            <ValuePlot chart={chart} />
            <PlotCaption $sub>{chart.valueText}</PlotCaption>
          </Plot>
          <Scale>
            <Spring $grow={1} />
            <ScaleLabel $tick="top">12.00</ScaleLabel>
            <Spring $grow={31} />
            <ScaleLabel>8.00</ScaleLabel>
            <Spring $grow={12} />
            <ScaleLabel>6.00</ScaleLabel>
            <Spring $grow={58} />
            <ScaleLabel>0.00</ScaleLabel>
            <Spring $grow={59} />
            <ScaleLabel>-6.00</ScaleLabel>
            <Spring $grow={13} />
            <ScaleLabel>-8.00</ScaleLabel>
            <Spring $grow={30} />
            <ScaleLabel $tick="bottom">-12.00</ScaleLabel>
            <Spring $grow={1} />
            <Marker $hot $top={chart.high - 665} $of={275}>9.50</Marker>
            <Marker $hot $top={chart.low - 665} $of={275}>-9.50</Marker>
          </Scale>
        </Pane>
        <TimeScale>
          {chart.times.map((time) => (
            <TimeLabel key={time}>{time}</TimeLabel>
          ))}
        </TimeScale>
      </ChartBody>
    </WindowClient>
  </WindowFrame>
);

/* ------------------------------------------------------------------- app */

const MENU = ['Файл', 'Вид', 'Вставка', 'Графики', 'Сервис', 'Окно', 'Справка'];

export default function App() {
  return (
    <Terminal>
      <GlobalStyle />
      <TitleBar>
        <AppIcon />
        <AppTitle>29257 - Binary.com-Server: Демо-счет - Hedge - Volatility 100 Index,M1</AppTitle>
        <CaptionButton aria-label="Свернуть">
          <Svg w={10} h={12}><path d="M0 5.500h10" stroke="#000" /></Svg>
        </CaptionButton>
        <CaptionButton aria-label="Восстановить">
          <Svg w={10} h={12}><path d="M.5 2.500h7v7h-7zM2.500 2V.5h7v7H8" stroke="#000" /></Svg>
        </CaptionButton>
        <CaptionButton aria-label="Закрыть">
          <Svg w={10} h={12}><path d="M0 0l10 10M10 0L0 10" stroke="#000" /></Svg>
        </CaptionButton>
      </TitleBar>
      <Menu>
        {MENU.map((item) => (
          <a key={item} href="#menu">{item}</a>
        ))}
      </Menu>
      <Toolbar>
        <ToolGroup>
          <Grip />
          <ToolButton aria-label="Новый график"><NewChartIcon /></ToolButton>
          <DropArrow aria-label="Список графиков" />
          <ToolButton aria-label="Профили"><WindowsIcon /></ToolButton>
          <DropArrow aria-label="Список профилей" />
          <Divider />
          <ToolButton $spaced aria-label="Обзор рынка"><TradeIcon /></ToolButton>
          <ToolButton $spaced aria-label="Окно данных"><PanelIcon /></ToolButton>
          <ToolButton aria-label="Навигатор"><FoldersIcon /></ToolButton>
          <Divider />
          <ToolButton $spaced aria-label="Бары"><BarsIcon /></ToolButton>
          <ToolButton $spaced $on aria-label="Свечи"><CandlesIcon /></ToolButton>
          <ToolButton aria-label="Линия"><LineIcon /></ToolButton>
          <Divider />
          <ToolButton $spaced aria-label="Увеличить"><ZoomIcon plus /></ToolButton>
          <ToolButton aria-label="Уменьшить"><ZoomIcon /></ToolButton>
          <Divider />
          <ToolButton $spaced $on aria-label="Автопрокрутка"><ScrollIcon /></ToolButton>
          <ToolButton $spaced $on aria-label="Сдвиг графика"><ShiftIcon /></ToolButton>
          <ToolButton aria-label="Период"><ClockIcon /></ToolButton>
          <DropArrow aria-label="Список периодов" />
          <ToolButton aria-label="Шаблоны"><IndicatorsIcon /></ToolButton>
          <DropArrow aria-label="Список шаблонов" />
        </ToolGroup>
        <ToolGroup>
          <Grip />
          <ToolButton $spaced $on aria-label="Курсор"><PointerIcon /></ToolButton>
          <ToolButton aria-label="Перекрестие"><CrosshairIcon /></ToolButton>
          <Divider />
          <ToolButton $spaced aria-label="Трендовая линия"><StrokeIcon d="M4.500 15.500l11-11" /></ToolButton>
          <ToolButton $spaced aria-label="Вертикальная линия"><StrokeIcon d="M10 3v14" /></ToolButton>
          <ToolButton aria-label="Горизонтальная линия"><StrokeIcon d="M3 10h14" /></ToolButton>
        </ToolGroup>
        <ToolEnd>
          <ToolButton aria-label="Поиск"><FindIcon /></ToolButton>
          <ToolButton aria-label="Чат"><ChatIcon /></ToolButton>
        </ToolEnd>
      </Toolbar>
      <Workspace>
        <ChartWindow chart={m1} />
        <ChartWindow chart={m5} />
      </Workspace>
      <TabStrip>
        <Tab href="#m1" $on>{m1.title}</Tab>
        <Tab href="#m5">{m5.title}</Tab>
        <TabScroll>
          <Nudge $back aria-label="Назад" />
          <Nudge aria-label="Вперёд" />
        </TabScroll>
      </TabStrip>
      <StatusBar>
        <StatusHint>Для вызова справки нажмите F1</StatusHint>
        <StatusCell $w={128}>Binary.com</StatusCell>
        <StatusCell $w={98} />
        <StatusCell $w={71} />
        <StatusCell $w={71} />
        <StatusCell $w={68} />
        <StatusCell $w={70} />
        <StatusCell $w={66} />
        <StatusCell $w={121}>
          <SignalIcon />
          6 / 24
        </StatusCell>
        <Watermark>SaveIMG.ru</Watermark>
      </StatusBar>
    </Terminal>
  );
}
